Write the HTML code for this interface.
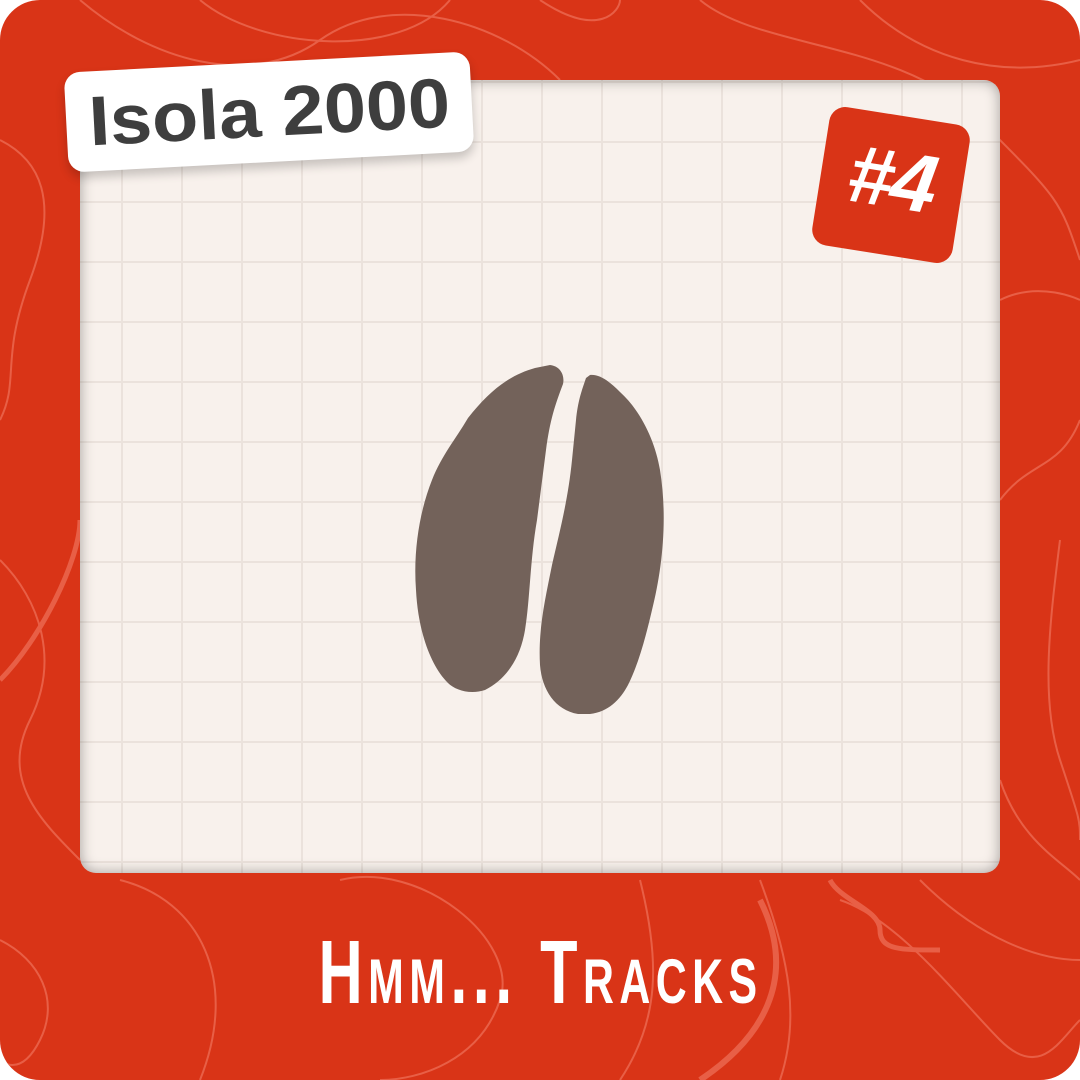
<!DOCTYPE html>
<html><head><style>
html,body{margin:0;padding:0;}
body{width:1080px;height:1080px;background:#fff;position:relative;overflow:hidden;font-family:"Liberation Sans",sans-serif;}
.bg{position:absolute;left:0;top:0;width:1080px;height:1080px;border-radius:40px;background:#d93417;overflow:hidden;}
.panel{position:absolute;left:80px;top:80px;width:920px;height:793px;border-radius:16px;background-color:#f8f1ec;
background-image:linear-gradient(to right,#ebe2dc 2px,transparent 2px),linear-gradient(to bottom,#ebe2dc 2px,transparent 2px);
background-size:60px 60px;background-position:41px 1px;box-shadow:inset 0 0 14px rgba(0,0,0,.35);}
.label{position:absolute;left:66px;top:62px;width:406px;height:100px;background:#fff;border-radius:16px;transform:rotate(-3deg);box-shadow:0 6px 10px rgba(0,0,0,.2);
font-weight:bold;font-size:70px;color:#3e3e3e;text-align:center;line-height:100px;letter-spacing:0px;}
.label span{display:inline-block;transform:scaleX(1.08);}
.badge{position:absolute;left:820px;top:115px;width:142px;height:140px;background:#d93417;border-radius:16px;transform:rotate(9deg);
color:#fff;font-weight:bold;font-style:italic;font-size:82px;line-height:130px;text-align:center;letter-spacing:-2px;}
.title{position:absolute;left:0;width:1080px;top:922px;text-align:center;color:#fff;font-family:"Liberation Sans Narrow","Liberation Sans",sans-serif;font-size:90px;font-weight:bold;font-variant:small-caps;letter-spacing:8px;}
.title span{display:inline-block;transform:scaleX(0.68);}
</style></head><body>
<div class="bg">
<svg width="1080" height="1080" style="position:absolute;left:0;top:0" fill="none" stroke="#ec6a52" stroke-width="2" opacity=".8">
<path d="M80 0 C150 60 250 90 320 40 S 500 20 560 80"/>
<path d="M200 0 C260 50 400 60 450 0"/>
<path d="M540 0 C600 40 620 10 620 0"/>
<path d="M700 0 C760 50 900 40 980 120 S1060 200 1080 260"/>
<path d="M860 0 C920 60 1000 80 1080 60"/>
<path d="M1000 300 C1040 280 1080 300 1080 300"/>
<path d="M1000 500 C1030 460 1060 470 1080 420"/>
<path d="M1060 540 C1050 620 1040 700 1060 760 S1080 820 1080 840"/>
<path d="M1000 780 C1020 840 1060 860 1080 880"/>
<path d="M0 140 C40 160 60 200 30 280 S 20 380 0 420"/>
<path d="M0 560 C40 600 60 660 30 720 S 40 820 80 860"/>
<path d="M0 940 C40 960 60 1000 40 1040 S 0 1060 0 1060"/>
<path d="M120 880 C200 900 240 980 200 1080"/>
<path d="M340 880 C420 860 520 940 500 1000 S 420 1080 380 1080"/>
<path d="M640 880 C660 960 660 1020 620 1080"/>
<path d="M760 880 C790 960 800 1020 780 1080"/>
<path d="M840 900 C900 920 960 1000 1000 1040 S1060 1040 1080 1020"/>
<path d="M920 880 C980 940 1040 960 1080 960"/>
<path d="M760 900 C800 980 760 1040 700 1080" stroke-width="6"/>
<path d="M0 680 C40 640 80 560 80 520" stroke-width="5"/>
<path d="M830 880 C840 900 880 910 880 930 S900 950 940 950" stroke-width="5"/>
</svg>
<div class="panel"></div>
<svg width="1080" height="1080" style="position:absolute;left:0;top:0">
<path fill="#73625a" d="M550 365 C560 366 565 375 563 384 C555 405 550 420 546 450 L537 520 C530 560 530 600 525 630 C520 660 505 680 485 690 C470 695 455 690 448 683 C430 665 418 630 416 590 C413 550 420 510 432 480 C442 455 455 440 468 418 C490 390 510 375 535 368 Z"/>
<path fill="#73625a" d="M590 375 C600 374 610 382 620 392 C640 410 655 440 660 470 C668 520 662 570 652 610 C645 640 638 665 628 685 C620 700 608 712 590 714 L578 714 C555 710 542 690 540 665 C538 630 545 600 552 565 C560 530 568 500 572 460 L576 420 C578 400 582 390 586 378 Z"/>
</svg>
<div class="label"><span>Isola 2000</span></div>
<div class="badge">#4</div>
<div class="title"><span>Hmm... Tracks</span></div>
</div>
</body></html>
